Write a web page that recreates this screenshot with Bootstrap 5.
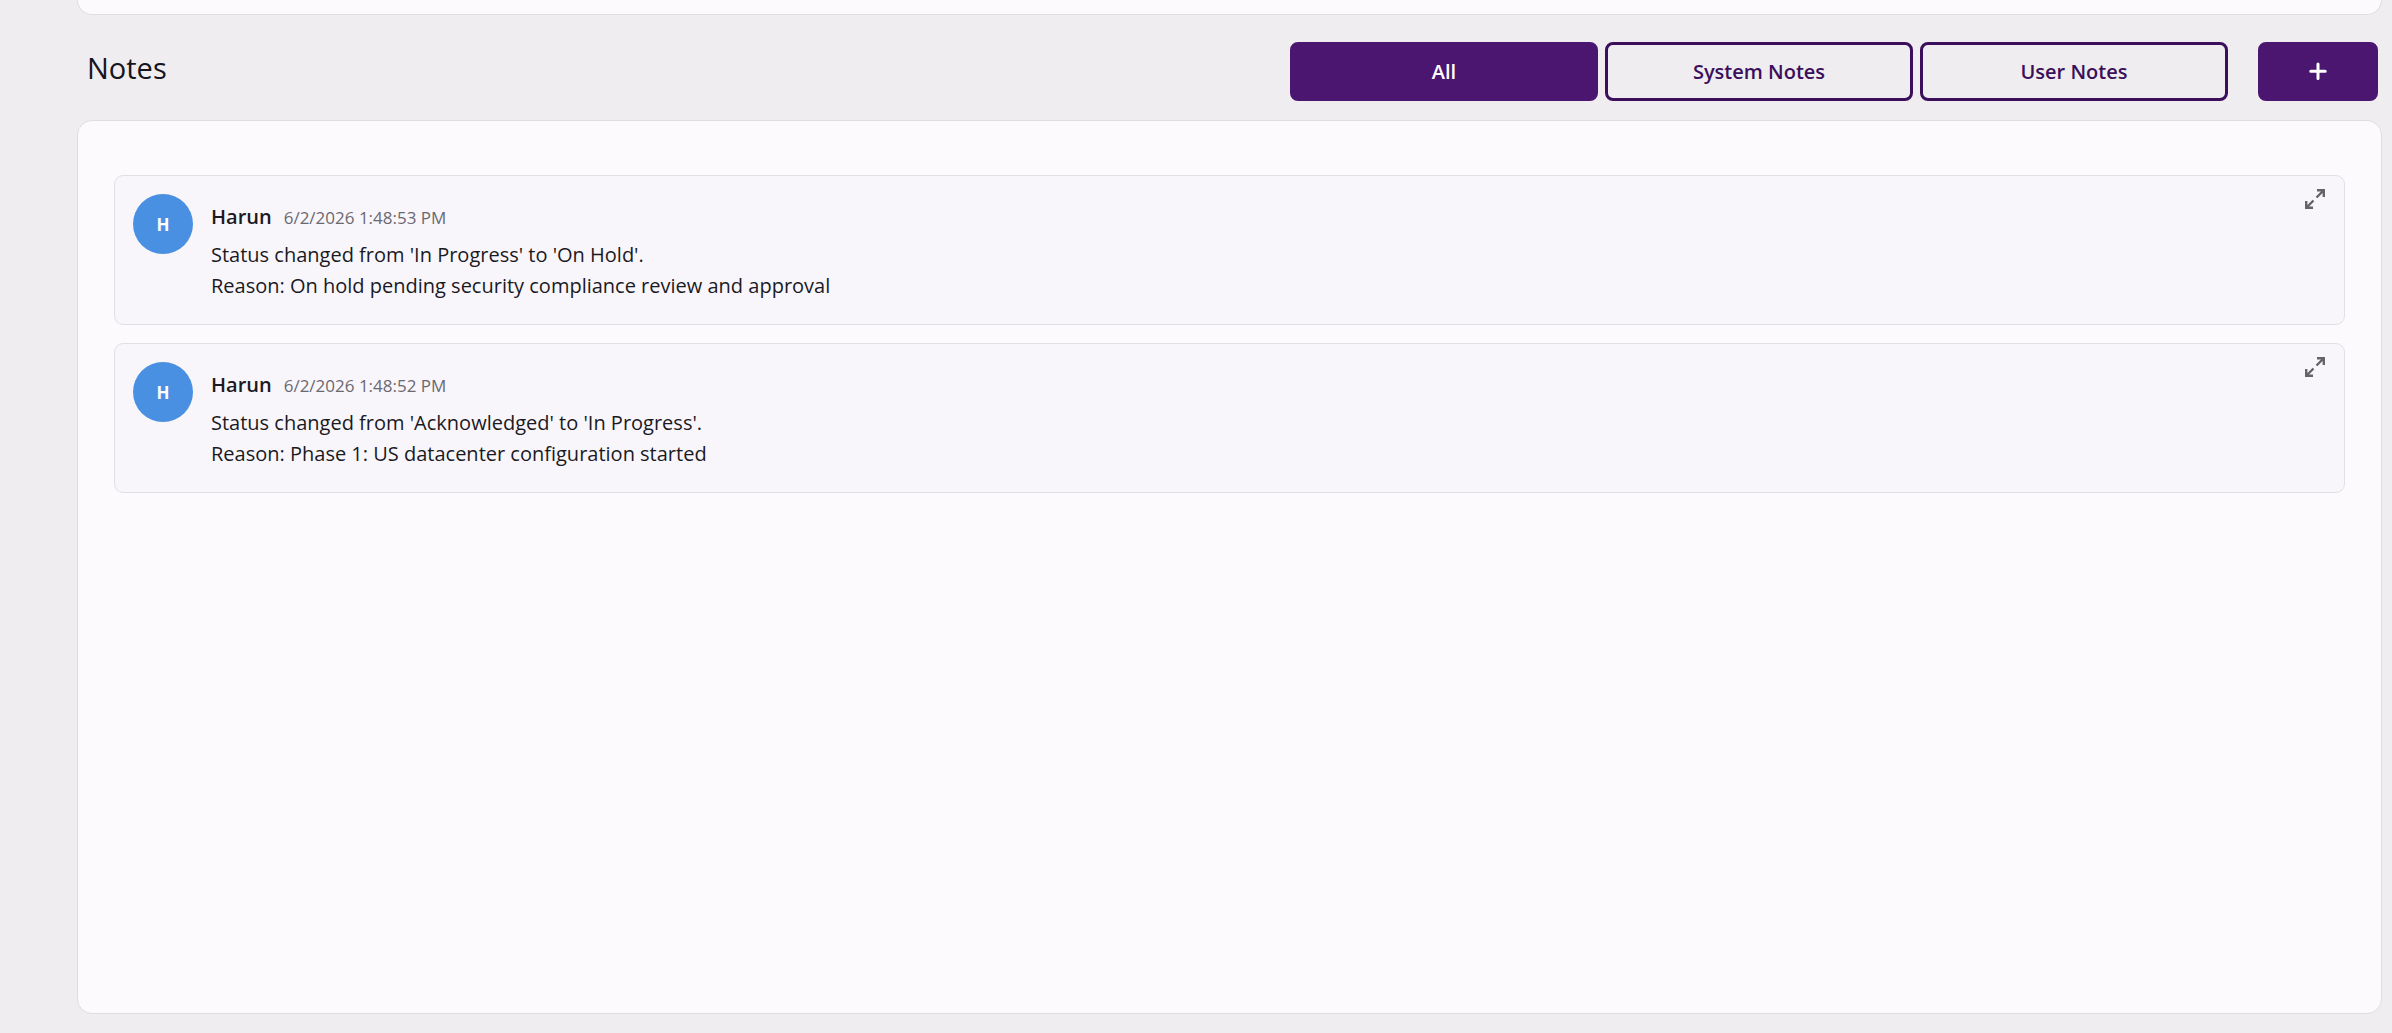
<!DOCTYPE html>
<html lang="en">
<head>
<meta charset="utf-8">
<meta name="viewport" content="width=device-width, initial-scale=1">
<title>Notes</title>
<link href="https://cdn.jsdelivr.net/npm/bootstrap@5.3.0/dist/css/bootstrap.min.css" rel="stylesheet">
<style>
  body { background: #efedef; color: #1b1a1f; font-family: "Open Sans", "Noto Sans", sans-serif; font-size: 20px; line-height: 31px; }
  .page-shell { padding: 0 10px 19px 77px; }
  .panel { background: #fcfafd; border: 1px solid #dfdde0; border-radius: 15px; }
  .panel-previous { height: 15px; border-top: 0; border-radius: 0 0 15px 15px; }
  .notes-bar { padding: 27px 4px 19px 10px; gap: 30px; }
  .notes-title { font-size: 29px; line-height: 52px; font-weight: 400; color: #151420; }
  .filters { gap: 7px; }
  .btn-note { height: 59px; border: 3px solid #3b0f5c; border-radius: 8px; font-size: 20px; font-weight: 600; color: #3b0f5c; --bs-btn-hover-color: #fff; --bs-btn-hover-bg: #4b1670; }
  .btn-note.btn-solid { background: #4b1670; border-color: #4b1670; color: #fff; }
  .btn-filter { width: 308px; }
  .btn-add { width: 120px; }
  .notes-panel { padding: 54px 36px; }
  .notes-list { gap: 18px; }
  .note-item { background: #f8f6fb; border: 1px solid #e2e0e5; border-radius: 9px; padding: 18px; gap: 18px; }
  .avatar { width: 60px; height: 60px; background: #4a90e2; color: #fff; font-size: 17px; font-weight: 700; }
  .note-head { gap: 12px; padding-top: 7px; margin-bottom: 6px; }
  .note-author { font-weight: 600; }
  .note-time { font-size: 17px; color: #6b6970; }
  .note-text { margin-bottom: 5px; }
  .btn-expand { width: 24px; height: 24px; margin: -7px -1px 0 0; color: #666468; }
</style>
<script src="https://cdn.jsdelivr.net/npm/bootstrap@5.3.0/dist/js/bootstrap.bundle.min.js"></script>
</head>
<body>
<div class="page-shell min-vh-100 d-flex flex-column">
  <div class="panel panel-previous"></div>
  <header class="notes-bar d-flex align-items-start">
    <h2 class="notes-title mb-0 me-auto">Notes</h2>
    <div class="filters d-flex" role="group" aria-label="Filter notes">
      <button type="button" class="btn btn-note btn-solid btn-filter">All</button>
      <button type="button" class="btn btn-note btn-filter">System Notes</button>
      <button type="button" class="btn btn-note btn-filter">User Notes</button>
    </div>
    <button type="button" class="btn btn-note btn-solid btn-add d-flex align-items-center justify-content-center" aria-label="Add note">
      <svg width="20" height="20" viewBox="0 0 20 20" fill="none" stroke="currentColor" stroke-width="3" stroke-linecap="round"><path d="M10 2v14.500M2.750 9.250h14.500"/></svg>
    </button>
  </header>
  <main class="panel notes-panel flex-grow-1">
    <div class="notes-list d-flex flex-column">
      <article class="note-item d-flex align-items-start">
        <div class="avatar rounded-circle d-flex align-items-center justify-content-center flex-shrink-0">H</div>
        <div class="flex-grow-1">
          <div class="note-head d-flex align-items-baseline"><span class="note-author">Harun</span><time class="note-time">6/2/2026 1:48:53 PM</time></div>
          <p class="note-text">Status changed from 'In Progress' to 'On Hold'.<br>Reason: On hold pending security compliance review and approval</p>
        </div>
        <button type="button" class="btn btn-expand border-0 p-0 d-flex align-items-center justify-content-center" aria-label="Expand note">
          <svg width="20" height="20" viewBox="0 0 20 20" fill="none" stroke="currentColor" stroke-width="2.400"><path d="M12 1.200h6.800V8M18.500 1.500l-7 7M8 18.800H1.200V12M1.500 18.500l7-7"/></svg>
        </button>
      </article>
      <article class="note-item d-flex align-items-start">
        <div class="avatar rounded-circle d-flex align-items-center justify-content-center flex-shrink-0">H</div>
        <div class="flex-grow-1">
          <div class="note-head d-flex align-items-baseline"><span class="note-author">Harun</span><time class="note-time">6/2/2026 1:48:52 PM</time></div>
          <p class="note-text">Status changed from 'Acknowledged' to 'In Progress'.<br>Reason: Phase 1: US datacenter configuration started</p>
        </div>
        <button type="button" class="btn btn-expand border-0 p-0 d-flex align-items-center justify-content-center" aria-label="Expand note">
          <svg width="20" height="20" viewBox="0 0 20 20" fill="none" stroke="currentColor" stroke-width="2.400"><path d="M12 1.200h6.800V8M18.500 1.500l-7 7M8 18.800H1.200V12M1.500 18.500l7-7"/></svg>
        </button>
      </article>
    </div>
  </main>
</div>
</body>
</html>
